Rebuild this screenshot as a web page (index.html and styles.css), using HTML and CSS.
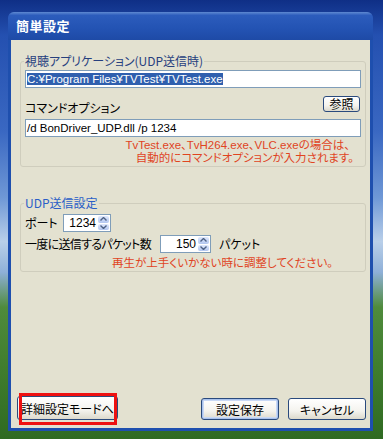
FILE: index.html
```html
<!DOCTYPE html>
<html lang="ja">
<head>
    <meta charset="UTF-8">
    <title>簡単設定</title>
    <link rel="stylesheet" href="styles.css">
</head>
<body>
    <div class="window">
        <div class="titlebar">簡単設定</div>
        <div class="client">
            <fieldset class="group">
                <legend class="group-label app">視聴アプリケーション(UDP送信時)</legend>
                <div class="field"><span class="selected">C:¥Program Files¥TVTest¥TVTest.exe</span></div>
                <div class="option-row">
                    <span class="label">コマンドオプション</span>
                    <button class="btn browse">参照</button>
                </div>
                <div class="field">/d BonDriver_UDP.dll /p 1234</div>
                <p class="note first"><span class="line one">TvTest.exe、TvH264.exe、VLC.exeの場合は、</span><span class="line">自動的にコマンドオプションが入力されます。</span></p>
            </fieldset>

            <fieldset class="group udp">
                <legend class="group-label">UDP送信設定</legend>
                <div class="spin-row">
                    <span class="label port-label">ポート</span>
                    <div class="spin port">
                        <span class="spin-value">1234</span>
                        <span class="spin-btns">
                            <span class="spin-btn"><svg width="7" height="4" viewBox="0 0 7 4"><path d="M0.5 3.5 L3.5 0.5 L6.5 3.5" fill="none" stroke="#4d6185" stroke-width="1.4"/></svg></span>
                            <span class="spin-btn"><svg width="7" height="4" viewBox="0 0 7 4"><path d="M0.5 0.5 L3.5 3.5 L6.5 0.5" fill="none" stroke="#4d6185" stroke-width="1.4"/></svg></span>
                        </span>
                    </div>
                </div>
                <div class="spin-row">
                    <span class="label packet-label">一度に送信するパケット数</span>
                    <div class="spin packets">
                        <span class="spin-value">150</span>
                        <span class="spin-btns">
                            <span class="spin-btn"><svg width="7" height="4" viewBox="0 0 7 4"><path d="M0.5 3.5 L3.5 0.5 L6.5 3.5" fill="none" stroke="#4d6185" stroke-width="1.4"/></svg></span>
                            <span class="spin-btn"><svg width="7" height="4" viewBox="0 0 7 4"><path d="M0.5 0.5 L3.5 3.5 L6.5 0.5" fill="none" stroke="#4d6185" stroke-width="1.4"/></svg></span>
                        </span>
                    </div>
                    <span class="label unit">パケット</span>
                </div>
                <p class="note second">再生が上手くいかない時に調整してください。</p>
            </fieldset>

            <div class="actions">
                <div class="marked">
                    <button class="btn advanced">詳細設定モードへ</button>
                    <span class="highlight-box"></span>
                </div>
                <div class="right-buttons">
                    <button class="btn default">設定保存</button>
                    <button class="btn">キャンセル</button>
                </div>
            </div>
        </div>
    </div>
</body>
</html>
```

FILE: styles.css
```css
html, body {
    margin: 0;
    padding: 0;
}

body {
    width: 383px;
    height: 439px;
    overflow: hidden;
    font-family: 'Noto Sans CJK JP', 'Liberation Sans', sans-serif;
    font-size: 12px;
    font-feature-settings: "palt";
    background: linear-gradient(to bottom, #0f2f86 0%, #2450b0 8%, #3a68c2 30%, #6f98d6 45%, #b9cfe9 55%, #8fb0d8 62%, #4f8b3c 70%, #3f7c2c 85%, #2f6a22 100%);
}

.window {
    width: 359px;
    margin: 12px 0 0 8px;
    padding: 0 3px 3px;
    background: #1e4fae;
    border-radius: 7px 7px 0 0;
}

.titlebar {
    height: 28px;
    line-height: 28px;
    margin: 0 -3px;
    padding-left: 8px;
    color: #ffffff;
    font-size: 13px;
    font-weight: bold;
    letter-spacing: 0.5px;
    background: linear-gradient(to bottom, #5f89d2 0%, #2c5cbc 12%, #2353b3 60%, #1e4aa6 100%);
    border-radius: 6px 6px 0 0;
}

.client {
    height: 388px;
    background: #e3e1d0;
    display: flex;
    flex-direction: column;
}

.group {
    margin: 14px 4px 0 9px;
    padding: 0 4px 1px 4px;
    border: 1px solid #cfcdbd;
    border-radius: 3px;
}

.group-label {
    padding: 0 1px;
    margin-left: -1px;
    line-height: 14px;
    color: #2a5ec7;
}

.group-label.app {
    color: #27407e;
}

.udp {
    margin-top: 29px;
}

.field {
    height: 16px;
    line-height: 16px;
    margin-top: 2px;
    padding: 0 1px;
    background: #ffffff;
    border: 1px solid #7f9db9;
    font-family: 'Liberation Sans', sans-serif;
    font-size: 11.5px;
    color: #000000;
    white-space: nowrap;
    overflow: hidden;
}

.selected {
    background: #2f5fae;
    color: #ffffff;
}

.option-row {
    display: flex;
    align-items: flex-end;
    justify-content: space-between;
    height: 19px;
    margin-top: 8px;
    margin-bottom: 4px;
}

.label {
    line-height: 14px;
    color: #000000;
}

.btn {
    font-family: 'Noto Sans CJK JP', sans-serif;
    font-feature-settings: "palt";
    font-size: 12px;
    color: #000000;
    padding: 0;
    background: linear-gradient(to bottom, #ffffff 0%, #f4f3ee 60%, #dcd9cc 100%);
    border: 1px solid #2a4a7d;
    border-radius: 3px;
    cursor: default;
}

.browse {
    width: 37px;
    height: 16px;
    line-height: 14px;
    margin-bottom: 3px;
    margin-right: 1px;
}

/* Liberation first so the line boxes stay as tight as the original */
.note {
    margin: 2px 0 0;
    font-family: 'Liberation Sans', 'Noto Sans CJK JP', sans-serif;
    font-size: 11.5px;
    text-align: right;
    padding-right: 7px;
    color: #e0441f;
}

.note .line {
    display: block;
    line-height: 13px;
}

.note .line.one {
    padding-right: 4px;
}

.note.second {
    margin-top: 3px;
    line-height: 14px;
    padding-right: 28px;
}

.spin-row {
    display: flex;
    align-items: center;
    margin-top: 3px;
}

.spin-row:first-of-type {
    margin-top: 4px;
}

.port-label {
    width: 38px;
}

.packet-label {
    width: 135px;
    letter-spacing: -0.7px;
}

.spin {
    display: flex;
    align-items: stretch;
    height: 18px;
    background: #ffffff;
    border: 1px solid #7f9db9;
    box-sizing: border-box;
}

.port {
    width: 48px;
}

.packets {
    width: 51px;
}

.spin-value {
    flex: 1;
    text-align: right;
    line-height: 16px;
    padding-right: 2px;
    font-family: 'Liberation Sans', sans-serif;
}

.spin-btns {
    display: flex;
    flex-direction: column;
    width: 11px;
    padding: 1px 1px 1px 0;
    gap: 1px;
}

.spin-btn {
    flex: 1;
    display: flex;
    align-items: center;
    justify-content: center;
    background: linear-gradient(to bottom, #dfe8fc, #b2c6f0);
    border-radius: 2px;
}

.unit {
    margin-left: 8px;
}

.actions {
    margin-top: auto;
    display: flex;
    justify-content: space-between;
    align-items: flex-end;
    padding: 0 4px 8px 6px;
}

.marked {
    position: relative;
}

.btn.advanced {
    display: block;
    width: 101px;
    height: 24px;
}

.highlight-box {
    position: absolute;
    left: 2px;
    top: -3px;
    width: 92px;
    height: 26px;
    border: 3px solid #ee1111;
}

.right-buttons {
    display: flex;
    gap: 9px;
}

.right-buttons .btn {
    width: 78px;
    height: 22px;
}

.btn.default {
    box-shadow: inset 0 0 0 1px #a9c2ec, inset 0 0 0 2px #c8d8f5;
}
```
